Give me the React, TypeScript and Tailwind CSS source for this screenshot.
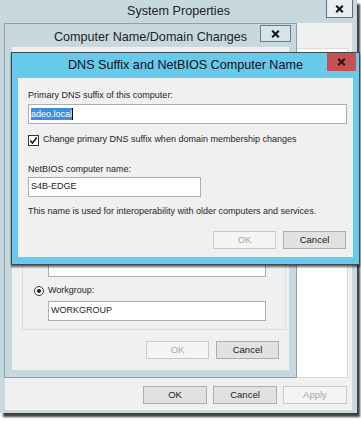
import React from 'react';

// --- small pieces of the Windows 8 dialog chrome ---
const CloseX = () => (
  <svg width="9" height="8" viewBox="0 0 9 8">
    <path d="M1.2 0.8 L7.8 7.2 M7.8 0.8 L1.2 7.2" stroke="currentColor" strokeWidth="2" />
  </svg>
);

const Button = ({ label, disabled, className = '' }: { label: string; disabled?: boolean; className?: string }) => (
  <div
    className={
      (disabled
        ? 'border-[#cacaca] bg-[#f4f4f4] text-[#a6a6a6] '
        : 'border-[#adadad] bg-[#e1e1e1] text-[#1a1a1a] ') +
      'h-[18px] flex items-center justify-center border text-[9.5px] ' +
      className
    }
  >
    {label}
  </div>
);

const TextBox = ({ children, className = '' }: { children?: React.ReactNode; className?: string }) => (
  <div className={'h-[20px] flex items-center pl-[2px] bg-white border border-[#abadb3] text-[9px] ' + className}>
    {children}
  </div>
);

const Radio = ({ checked }: { checked?: boolean }) => (
  <div className="w-[10px] h-[10px] rounded-full border border-[#333] bg-white flex items-center justify-center">
    {checked && <div className="w-[4px] h-[4px] rounded-full bg-[#1a1a1a]" />}
  </div>
);

const App = () => {
  return (
    <div className="relative w-[361px] h-[421px] overflow-hidden bg-white font-['Liberation_Sans',Arial,sans-serif] text-[#1e1e1e]">
      {/* System Properties (inactive) */}
      <div className="absolute left-0 top-0 w-[357px] h-[413px] flex flex-col bg-[#c7d9df] shadow-[3px_4px_2px_rgba(0,0,0,0.75)]">
        <div className="relative h-[23px] flex items-center justify-center text-[12.6px] text-[#222]">
          System Properties
          <div className="absolute right-[4px] top-[-1px] w-[27px] h-[19px] flex items-center justify-center border border-[#5f6f77] bg-[#e9eff1] text-[#111]">
            <CloseX />
          </div>
        </div>
        <div className="flex-1 mx-[5px] mb-[3px] flex flex-col bg-[#f0f0f0]">
          <div className="mt-[25px] ml-[6px] mr-[4px] h-[330px] bg-white border border-[#d9d9d9]" />
          <div className="mt-[8px] pr-[5px] flex justify-end gap-[6px]">
            <Button label="OK" className="w-[64px]" />
            <Button label="Cancel" className="w-[64px]" />
            <Button label="Apply" disabled className="w-[64px]" />
          </div>
        </div>
      </div>

      {/* Computer Name/Domain Changes (inactive); its upper part lies under the DNS dialog */}
      <div className="absolute left-[4px] top-[23px] w-[293px] h-[355px] flex flex-col border border-[#8fa1a8] bg-[#c7d9df]">
        <div className="relative h-[23px] pt-[4px] flex items-center justify-center text-[12.6px] text-[#222]">
          Computer Name/Domain Changes
          <div className="absolute right-[5px] top-[1px] w-[31px] h-[17px] flex items-center justify-center border border-[#6b7c84] bg-[#d6e4e9] text-[#111]">
            <CloseX />
          </div>
        </div>
        <div className="flex-1 mx-[7px] mb-[7px] flex flex-col justify-end bg-[#f0f0f0] text-[9px]">
          <div className="ml-[10px] mr-[3px] pl-[11px] pr-[19px] pt-[10px] pb-[8px] border border-[#dcdcdc]">
            <div className="h-[16px] flex items-center">
              <Radio />
            </div>
            <TextBox className="ml-[14px] mt-[2px]" />
            <div className="mt-[6px] h-[16px] flex items-center gap-[4px]">
              <Radio checked />
              <span>Workgroup:</span>
            </div>
            <TextBox className="ml-[14px] mt-[2px]">WORKGROUP</TextBox>
          </div>
          <div className="mt-[11px] mb-[11px] pr-[10px] flex justify-end gap-[7px]">
            <Button label="OK" disabled className="w-[63px]" />
            <Button label="Cancel" className="w-[63px]" />
          </div>
        </div>
      </div>

      {/* DNS Suffix and NetBIOS Computer Name (active) */}
      <div className="absolute left-[11px] top-[52px] w-[349px] h-[213px] flex flex-col border border-[#3a4a50] bg-[#67c9ec] shadow-[0_2px_2px_rgba(0,0,0,0.6)]">
        <div className="relative h-[25px] flex items-center justify-center text-[12.6px] text-[#111]">
          DNS Suffix and NetBIOS Computer Name
          <div className="absolute right-[3px] top-0 w-[29px] h-[18px] flex items-center justify-center bg-[#c75050] text-[#1a1a1a]">
            <CloseX />
          </div>
        </div>
        <div className="flex-1 mx-[6px] mb-[7px] pt-[11px] pl-[10px] pr-[6px] flex flex-col bg-[#f0f0f0] text-[9px]">
          <p className="h-[12px] leading-[12px]">Primary DNS suffix of this computer:</p>
          <TextBox className="mt-[3px]">
            <span className="h-[12px] leading-[12px] bg-[#3d8ee0] text-white">adeo.local</span>
            <span className="w-[1px] h-[12px] bg-black" />
          </TextBox>
          <div className="mt-[10px] h-[12px] flex items-center gap-[4px]">
            <div className="w-[11px] h-[11px] border border-[#333] bg-white">
              <svg width="9" height="9" viewBox="0 0 9 9">
                <path d="M1.3 4.6 L3.5 7 L7.8 1.6" fill="none" stroke="#1a1a1a" strokeWidth="1.6" />
              </svg>
            </div>
            <span>Change primary DNS suffix when domain membership changes</span>
          </div>
          <p className="mt-[17px] h-[12px] leading-[12px]">NetBIOS computer name:</p>
          <TextBox className="mt-[2px] w-[173px]">S4B-EDGE</TextBox>
          <p className="mt-[8px] h-[12px] leading-[12px]">
            This name is used for interoperability with older computers and services.
          </p>
          <div className="mt-[14px] pr-[1px] flex justify-end gap-[7px]">
            <Button label="OK" disabled className="w-[63px]" />
            <Button label="Cancel" className="w-[63px]" />
          </div>
        </div>
      </div>
    </div>
  );
};

export default App;
